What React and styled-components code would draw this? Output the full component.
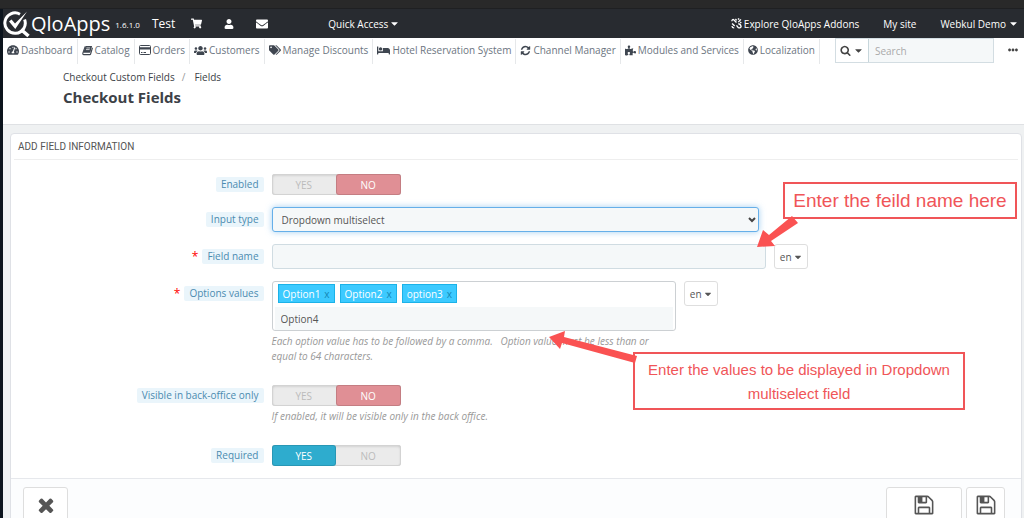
import React, { useState } from "react"
import styled, { createGlobalStyle, css } from "styled-components"
import {
  FaTachometerAlt,
  FaUsers,
  FaTags,
  FaBed,
  FaPuzzlePiece,
  FaGlobeAmericas,
  FaShoppingCart,
  FaUser,
  FaEnvelope,
  FaCaretDown,
  FaEllipsisH,
} from "react-icons/fa"

const Glyph = ({ d, size = 12 }) => (
  <svg
    width={size}
    height={size}
    viewBox="0 0 1792 1792"
    fill="currentColor"
    aria-hidden="true"
  >
    <path d={d} />
  </svg>
)

const SEARCH =
  "M1216 832q0-185-131.5-316.5t-316.5-131.5-316.5 131.5-131.5 316.5 131.5 316.5 316.5 131.5 316.5-131.5 131.5-316.5zm512 832q0 52-38 90t-90 38q-54 0-90-38l-343-342q-179 124-399 124-143 0-273.5-55.5t-225-150-150-225-55.5-273.5 55.5-273.5 150-225 225-150 273.5-55.5 273.5 55.5 225 150 150 225 55.5 273.5q0 220-124 399l343 343q37 37 37 90z"
const TIMES =
  "M1490 1322q0 40-28 68l-136 136q-28 28-68 28t-68-28l-294-294-294 294q-28 28-68 28t-68-28l-136-136q-28-28-28-68t28-68l294-294-294-294q-28-28-28-68t28-68l136-136q28-28 68-28t68 28l294 294 294-294q28-28 68-28t68 28l136 136q28 28 28 68t-28 68l-294 294 294 294q28 28 28 68z"
const FLOPPY =
  "M512 1536h768v-384h-768v384zm896 0h128v-896q0-14-10-38.5t-20-34.5l-281-281q-10-10-34-20t-39-10v416q0 40-28 68t-68 28h-576q-40 0-68-28t-28-68v-416h-128v1280h128v-416q0-40 28-68t68-28h832q40 0 68 28t28 68v416zm-384-928v-320q0-13-9.5-22.5t-22.5-9.5h-192q-13 0-22.5 9.5t-9.5 22.5v320q0 13 9.5 22.5t22.5 9.5h192q13 0 22.5-9.5t9.5-22.5zm640 32v928q0 40-28 68t-68 28h-1344q-40 0-68-28t-28-68v-1344q0-40 28-68t68-28h928q40 0 88 20t76 48l280 280q28 28 48 76t20 88z"
const REFRESH =
  "M1639 1056q0 5-1 7-64 268-268 434.5t-478 166.5q-146 0-282.5-55t-243.5-157l-129 129q-19 19-45 19t-45-19-19-45v-448q0-26 19-45t45-19h448q26 0 45 19t19 45-19 45l-137 137q71 66 161 102t187 36q134 0 250-65t186-179q11-17 53-117 8-23 30-23h192q13 0 22.5 9.5t9.5 22.5zm25-800v448q0 26-19 45t-45 19h-448q-26 0-45-19t-19-45 19-45l138-138q-148-137-349-137-134 0-250 65t-186 179q-11 17-53 117-8 23-30 23h-199q-13 0-22.5-9.5t-9.5-22.5v-7q65-268 270-434.5t480-166.5q146 0 284 55.5t245 156.5l130-129q19-19 45-19t45 19 19 45z"

const BookIcon = () => (
  <svg width="11" height="11" viewBox="0 0 12 12" aria-hidden="true">
    <path d="M4 1h7L9 8.500H1.200z" fill="currentColor" />
    <path
      d="M3.500 1.500 1 8.500q-.5 2 1 2h6.500q.7 0 .9-.7L11.400 3"
      fill="none"
      stroke="currentColor"
      strokeWidth="1.200"
    />
    <path d="M4.800 3.200h4M4.300 5h4" stroke="#fff" strokeWidth=".8" />
  </svg>
)

const CardIcon = () => (
  <svg width="12" height="12" viewBox="0 0 12 12" aria-hidden="true">
    <rect
      x=".5"
      y="1.500"
      width="11"
      height="9"
      rx="1"
      fill="none"
      stroke="currentColor"
    />
    <path
      d="M0 3.300h12v2.200H0zM2 8h1.500v1H2zM4.500 8H7v1H4.500z"
      fill="currentColor"
    />
  </svg>
)

const AddonsIcon = () => (
  <svg
    width="11"
    height="11"
    viewBox="0 0 12 12"
    fill="none"
    stroke="currentColor"
    strokeWidth="1.500"
    aria-hidden="true"
  >
    <path d="M1 3.500q0-2 1.800-1.800L6 5M4.800 1.200l1.400 1.400M8 4.500l2.800-3M7.500 1.500 9 .8" />
    <path d="M1.200 6 4 8.800M1 8.800q.5 2.200 2.500 2M6 8l2 2.500q2.500 1 3-1.500 0-1.800-3-3M10 4.500l1.200 1" />
  </svg>
)

const Logo = () => (
  <svg width="28" height="28" viewBox="0 0 28 28" fill="none" aria-hidden="true">
    <path
      d="M17 4.200A10.200 10.200 0 1 0 21.600 9.500"
      stroke="#fff"
      strokeWidth="3"
    />
    <path d="M18 19.500 25.500 26" stroke="#fff" strokeWidth="3.600" />
    <path d="M6 11.500 8.500 9.500 12 13.500 24 1.500 12.300 19z" fill="#fff" />
  </svg>
)

const tabs = [
  { name: "Dashboard", icon: <FaTachometerAlt size={12} /> },
  { name: "Catalog", icon: <BookIcon /> },
  { name: "Orders", icon: <CardIcon /> },
  { name: "Customers", icon: <FaUsers size={13} /> },
  { name: "Manage Discounts", icon: <FaTags size={12} /> },
  { name: "Hotel Reservation System", icon: <FaBed size={13} /> },
  { name: "Channel Manager", icon: <Glyph d={REFRESH} size={11} /> },
  { name: "Modules and Services", icon: <FaPuzzlePiece size={11} /> },
  { name: "Localization", icon: <FaGlobeAmericas size={10} /> },
]

const Toggle = ({ id, label, defaultOn }) => {
  const [on, setOn] = useState(defaultOn)
  return (
    <Switch role="radiogroup" aria-label={label}>
      <SwitchOption $active={on} $color="#2eacce">
        <input
          type="radio"
          id={id}
          name={id}
          checked={on}
          onChange={() => setOn(true)}
        />
        YES
      </SwitchOption>
      <SwitchOption $active={!on} $color="#e08f95">
        <input
          type="radio"
          name={id}
          checked={!on}
          onChange={() => setOn(false)}
        />
        NO
      </SwitchOption>
    </Switch>
  )
}

const Field = ({ id, label, required, compact, children }) => (
  <FormRow>
    <LabelCell $compact={compact}>
      {required && <Star>*</Star>}
      <Label htmlFor={id}>{label}</Label>
    </LabelCell>
    <Controls>{children}</Controls>
  </FormRow>
)

const LangButton = () => (
  <Lang type="button">
    en <FaCaretDown size={10} />
  </Lang>
)

const App = () => {
  const [options, setOptions] = useState(["Option1", "Option2", "option3"])

  return (
    <>
      <GlobalStyle />
      <BrowserEdge />
      <Page>
        <Header>
          <Brand href="#">
            <Logo />
            <BrandName>QloApps</BrandName>
          </Brand>
          <Version>1.6.1.0</Version>
          <ShopName href="#">Test</ShopName>
          <Shortcuts>
            <HeaderLink href="#" aria-label="Orders">
              <FaShoppingCart size={11} />
            </HeaderLink>
            <HeaderLink href="#" aria-label="Customers">
              <FaUser size={10} />
            </HeaderLink>
            <HeaderLink href="#" aria-label="Messages">
              <FaEnvelope size={12} />
            </HeaderLink>
          </Shortcuts>
          <QuickAccess type="button">
            Quick Access <FaCaretDown size={11} />
          </QuickAccess>
          <HeaderRight>
            <HeaderLink href="#">
              <AddonsIcon />
              Explore QloApps Addons
            </HeaderLink>
            <HeaderLink href="#">My site</HeaderLink>
            <HeaderLink href="#">
              Webkul Demo <FaCaretDown size={11} />
            </HeaderLink>
          </HeaderRight>
        </Header>

        <Nav>
          <TabList>
            {tabs.map(tab => (
              <Tab key={tab.name}>
                <a href="#">
                  {tab.icon}
                  {tab.name}
                </a>
              </Tab>
            ))}
          </TabList>
          <SearchForm>
            <SearchButton type="button" aria-label="Search in">
              <Glyph d={SEARCH} size={11} />
              <FaCaretDown size={11} />
            </SearchButton>
            <SearchInput placeholder="Search" aria-label="Search" />
          </SearchForm>
          <MoreButton type="button" aria-label="More">
            <FaEllipsisH size={10} />
          </MoreButton>
        </Nav>

        <PageHead>
          <Breadcrumb>
            <a href="#">Checkout Custom Fields</a>
            <Slash>/</Slash>
            <a href="#">Fields</a>
          </Breadcrumb>
          <h1>Checkout Fields</h1>
        </PageHead>

        <Panel>
          <PanelHeading>Add field information</PanelHeading>
          <Form>
            <Field id="enabled" label="Enabled" compact>
              <Toggle id="enabled" label="Enabled" defaultOn={false} />
            </Field>
            <Field id="input-type" label="Input type">
              <SelectWrap>
                <Select id="input-type">
                  <option>Dropdown multiselect</option>
                </Select>
                <svg width="8" height="6" viewBox="0 0 8 6" aria-hidden="true">
                  <path
                    d="M1 1l3 3 3-3"
                    fill="none"
                    stroke="#444"
                    strokeWidth="2"
                  />
                </svg>
              </SelectWrap>
            </Field>
            <Field id="field-name" label="Field name" required>
              <TextInput id="field-name" />
              <LangButton />
            </Field>
            <Field id="options" label="Options values" required>
              <OptionsColumn>
                <TagBox>
                  <Tags>
                    {options.map(option => (
                      <Tag key={option}>
                        {option}
                        <button
                          type="button"
                          aria-label={`Remove ${option}`}
                          onClick={() =>
                            setOptions(options.filter(o => o !== option))
                          }
                        >
                          x
                        </button>
                      </Tag>
                    ))}
                  </Tags>
                  <TagInput id="options" defaultValue="Option4" />
                </TagBox>
                <Help>
                  Each option value has to be followed by a comma. &nbsp; Option
                  value must be less than or equal to 64 characters.
                </Help>
              </OptionsColumn>
              <LangButton />
            </Field>
            <Field id="visible" label="Visible in back-office only" compact>
              <div>
                <Toggle
                  id="visible"
                  label="Visible in back-office only"
                  defaultOn={false}
                />
                <Help>
                  If enabled, it will be visible only in the back office.
                </Help>
              </div>
            </Field>
            <Field id="required" label="Required" compact>
              <Toggle id="required" label="Required" defaultOn />
            </Field>
          </Form>

          <PanelFooter>
            <FooterButton type="button" $width={45}>
              <Glyph d={TIMES} size={22} />
              Cancel
            </FooterButton>
            <FooterRight>
              <FooterButton type="button" $width={76}>
                <Glyph d={FLOPPY} size={22} />
                Save and stay
              </FooterButton>
              <FooterButton type="button" $width={39}>
                <Glyph d={FLOPPY} size={22} />
                Save
              </FooterButton>
            </FooterRight>
          </PanelFooter>

          <NameNote>
            Enter the feild name here
            <svg width="46" height="36" viewBox="0 0 46 36" aria-hidden="true">
              <path d="M35 1 12 20 6 15 0 32 18 31 14 26 41 8z" />
            </svg>
          </NameNote>
          <ValuesNote>
            Enter the values to be displayed in Dropdown multiselect field
            <svg width="90" height="34" viewBox="0 0 90 34" aria-hidden="true">
              <path d="M0 7 16 1 15 7 88 26 86 33 13 13 11 19z" />
            </svg>
          </ValuesNote>
        </Panel>
      </Page>
    </>
  )
}

const GlobalStyle = createGlobalStyle`
  *, *::before, *::after {
    box-sizing: border-box;
  }

  html {
    height: 100%;
    overflow: hidden;
    background: #eff1f2;
  }

  body {
    margin: 0;
    color: #555;
    font: 10px/14px "Open Sans", sans-serif;
  }

  a {
    color: inherit;
    text-decoration: none;
  }

  button, input, select {
    margin: 0;
    color: inherit;
    font: inherit;
  }

  svg {
    flex: none;
  }
`

const BrowserEdge = styled.div`
  height: 9px;
  background: #292929;
  border-bottom: 1px solid #1f2022;
`

const Page = styled.div`
  border-left: 3px solid #0c141d;
`

const Header = styled.header`
  display: flex;
  align-items: center;
  height: 29px;
  background: #282b30;
  color: #fff;
`

const Brand = styled.a`
  display: flex;
  align-items: center;
`

const BrandName = styled.span`
  font-size: 20px;
  line-height: 28px;
`

const Version = styled.span`
  margin: 2px 0 0 5px;
  font-size: 8px;
`

const ShopName = styled.a`
  margin-left: 12px;
  font-size: 12px;
`

const HeaderLink = styled.a`
  display: flex;
  align-items: center;
  gap: 2px;
`

const Shortcuts = styled.div`
  display: flex;
  gap: 22px;
  margin-left: 16px;
`

const QuickAccess = styled.button`
  display: flex;
  align-items: center;
  gap: 1px;
  margin-left: 60px;
  padding: 0;
  border: 0;
  background: none;
`

const HeaderRight = styled.div`
  display: flex;
  gap: 24px;
  margin: 0 5px 0 auto;
`

const Nav = styled.nav`
  display: flex;
  height: 26px;
  background: #fff;
  color: #6c7581;
`

const TabList = styled.ul`
  display: flex;
  flex: none;
  margin: 1px 0 0;
  padding: 0;
  list-style: none;
`

const Tab = styled.li`
  border-right: 1px solid #e6e8ea;

  a {
    display: flex;
    align-items: center;
    gap: 2px;
    height: 22px;
    padding: 0 4px;
    white-space: nowrap;
  }

  svg {
    color: #3f4650;
  }
`

const SearchForm = styled.form`
  display: flex;
  flex: 1;
  min-width: 0;
  height: 25px;
  margin-left: 15px;
  border: 1px solid #d3dde2;
`

const SearchButton = styled.button`
  display: flex;
  align-items: center;
  justify-content: center;
  gap: 2px;
  width: 33px;
  padding: 0;
  border: 0;
  border-right: 1px solid #c7d6db;
  background: #fff;
  color: #444;
`

const SearchInput = styled.input`
  flex: 1;
  min-width: 0;
  padding: 0 6px;
  border: 0;
  background: #f5f8f9;

  &::placeholder {
    color: #aaa;
  }
`

const MoreButton = styled.button`
  width: 30px;
  padding: 0 0 0 8px;
  border: 0;
  background: none;
  color: #444;
`

const PageHead = styled.div`
  height: 61px;
  padding: 6px 0 0 60px;
  background: #fff;
  border-bottom: 1px solid #dfe1e4;
  color: #3c4147;

  h1 {
    margin: 4px 0 0;
    font-size: 15px;
    line-height: 18px;
  }
`

const Breadcrumb = styled.div`
  display: flex;
`

const Slash = styled.span`
  margin: 0 9px 0 7px;
  color: #999;
`

const Panel = styled.main`
  position: relative;
  margin: 8px 2px 0 7px;
  background: #fff;
  border: 1px solid #dfe1e6;
  border-radius: 4px;
`

const PanelHeading = styled.h2`
  height: 26px;
  margin: 0 3px;
  padding-left: 4px;
  border-bottom: 1px solid #eee;
  font: 400 10px/25px Roboto, sans-serif;
  text-transform: uppercase;
`

const Form = styled.form`
  padding: 14px 0 12px;
`

const FormRow = styled.div`
  display: flex;
  margin-bottom: 12px;

  &:last-child {
    margin-bottom: 0;
  }
`

const LabelCell = styled.div`
  display: flex;
  align-items: center;
  justify-content: flex-end;
  flex: none;
  width: 25%;
  height: ${({ $compact }) => ($compact ? 21 : 25)}px;
`

const Label = styled.label`
  padding: 0 5px;
  background: #eaf5fb;
  border-radius: 2px;
  color: #4a8bb0;
  line-height: 15px;
`

const Star = styled.span`
  margin-right: 4px;
  color: red;
  font-size: 12px;
`

const Controls = styled.div`
  display: flex;
  flex: 1;
  align-items: flex-start;
  gap: 8px;
  padding-left: 8px;
`

const Switch = styled.div`
  display: flex;
  width: 129px;
  height: 21px;
  background: #ebebeb;
  border-radius: 3px;
  box-shadow: inset 0 0 0 1px #d3d3d3, inset 0 1px 3px rgba(0, 0, 0, 0.2);
`

const SwitchOption = styled.label`
  display: flex;
  flex: 1;
  align-items: center;
  justify-content: center;
  border-radius: 3px;
  color: #bbb;
  cursor: pointer;

  input {
    position: absolute;
    opacity: 0;
  }

  ${({ $active, $color }) =>
    $active &&
    css`
      background: ${$color};
      box-shadow: inset 0 0 0 1px rgba(0, 0, 0, 0.12);
      color: #fff;
    `}
`

const SelectWrap = styled.div`
  position: relative;
  flex: none;
  width: 65%;

  svg {
    position: absolute;
    top: 10px;
    right: 3px;
    pointer-events: none;
  }
`

const Select = styled.select`
  width: 100%;
  height: 25px;
  padding: 0 9px;
  appearance: none;
  background: #f5f8f9;
  border: 1px solid #66afe9;
  border-radius: 3px;
  box-shadow: 0 0 6px rgba(102, 175, 233, 0.6);
`

const TextInput = styled.input`
  width: 66%;
  height: 25px;
  background: #f5f8f9;
  border: 1px solid #d0dce2;
  border-radius: 3px;
`

const Lang = styled.button`
  display: flex;
  align-items: center;
  justify-content: center;
  gap: 1px;
  width: 34px;
  height: 25px;
  padding: 0;
  background: #fff;
  border: 1px solid #dedede;
  border-radius: 3px;
`

const OptionsColumn = styled.div`
  flex: none;
  width: 54%;
`

const TagBox = styled.div`
  padding: 2px 2px 0 2px;
  background: #fff;
  border: 1px solid #ccd0d3;
  border-radius: 3px;
`

const Tags = styled.div`
  display: flex;
  gap: 5px;
  padding-left: 3px;
`

const Tag = styled.span`
  display: flex;
  align-items: center;
  gap: 4px;
  height: 19px;
  padding: 0 4px;
  background: #3ccaff;
  border: 1px solid #1bb2e8;
  color: #fff;

  button {
    padding: 0;
    border: 0;
    background: none;
    color: #1488b5;
  }
`

const TagInput = styled.input`
  display: block;
  width: 100%;
  height: 23px;
  margin-top: 4px;
  padding: 0 6px;
  border: 0;
  background: #f5f8f9;
`

const Help = styled.p`
  margin: 3px 0 9px;
  padding-right: 16px;
  color: #999;
  font-style: italic;
  line-height: 15px;
`

const PanelFooter = styled.div`
  display: flex;
  justify-content: space-between;
  padding: 8px 16px 8px 12px;
  background: #fcfdfe;
  border-top: 1px solid #e6e8ec;
`

const FooterRight = styled.div`
  display: flex;
  gap: 4px;
`

const FooterButton = styled.button`
  display: flex;
  flex-direction: column;
  align-items: center;
  width: ${({ $width }) => $width}px;
  padding: 6px 0;
  background: #fff;
  border: 1px solid #dedede;
  border-radius: 3px;
  line-height: 12px;
  white-space: nowrap;
`

const Note = styled.div`
  position: absolute;
  background: #fff;
  border: 2px solid #f05558;
  color: #f05558;
  font-family: "Liberation Sans", sans-serif;
  text-align: center;

  svg {
    position: absolute;
    fill: #fa5252;
  }
`

const NameNote = styled(Note)`
  top: 48px;
  right: 4px;
  width: 234px;
  font-size: 19px;
  line-height: 33px;

  svg {
    top: 31px;
    left: -28px;
  }
`

const ValuesNote = styled(Note)`
  top: 218px;
  right: 56px;
  width: 332px;
  padding: 4px 6px 2px;
  font-size: 15px;
  line-height: 24px;

  svg {
    top: -24px;
    left: -86px;
  }
`

export default App
